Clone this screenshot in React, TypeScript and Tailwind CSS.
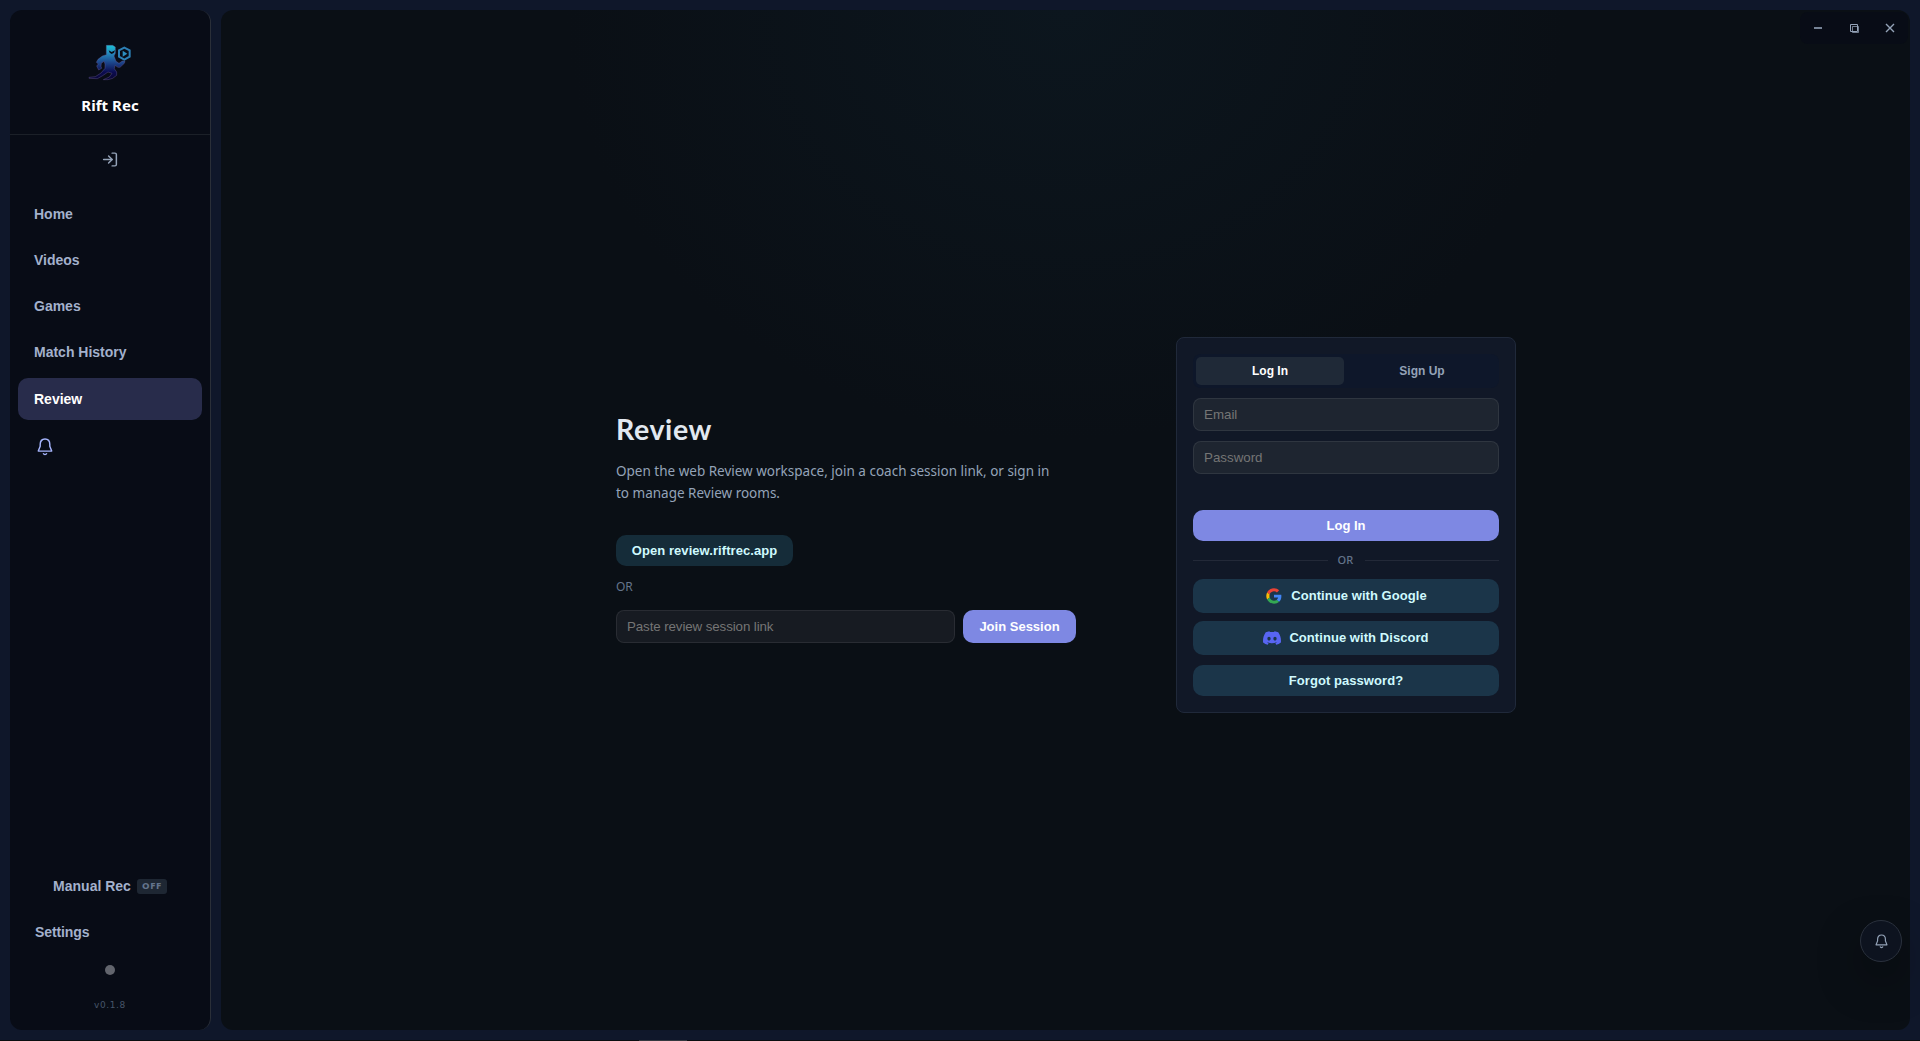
import type { ReactNode } from "react";
import { LogIn } from "lucide-react";
import { SiDiscord } from "react-icons/si";

const navItems = ["Home", "Videos", "Games", "Match History", "Review"];

const inputCls =
  "h-[33px] w-full rounded-lg border border-white/8 bg-[#1e2530] px-[10px] text-[13.33px] text-gray-200 outline-none placeholder:text-[#757575]";

const secondaryCls =
  "flex w-full items-center justify-center rounded-[10px] bg-[#1b3549] text-[13px] font-bold tracking-[0.06px] text-[#cffafe]";

function Logo() {
  return (
    <svg className="h-[37px] w-11" viewBox="264 132 132 111" fill="none">
      <defs>
        <linearGradient id="rift" x1="0" y1="134" x2="0" y2="240" gradientUnits="userSpaceOnUse">
          <stop offset="0" stopColor="#16c5d8" />
          <stop offset="0.22" stopColor="#2590c0" />
          <stop offset="0.5" stopColor="#1d478c" />
          <stop offset="0.78" stopColor="#0b0c50" />
          <stop offset="1" stopColor="#0a0630" />
        </linearGradient>
      </defs>
      <path
        fill="url(#rift)"
        stroke="#6a5a9a"
        strokeOpacity="0.6"
        strokeWidth="2"
        d="M319 136H338L346 141V160L342 168L348 184L357 190L367 183L375 184L373 190L360 202H354L345 196L343 206L350 216V226L338 235L324 239H310L328 231L336 220L324 216L308 227L292 236L267 235V232L286 230L303 219L315 205V192L312 184L304 190L303 199L305 205L296 210L290 198L295 192L289 187L294 178L307 168L319 164Z"
      />
      <path fill="#080c16" d="M326 151L335 156L345 151L342 158L335 162L329 158Z" />
      <path stroke="#2c7fb4" strokeWidth="6" d="M373 143L389 151V170L373 179L357 170V151Z" />
      <path fill="#2c8fc0" d="M368 152V170L382 161Z" />
    </svg>
  );
}

function GoogleIcon() {
  return (
    <svg className="h-[18px] w-[18px]" viewBox="-4 -4 56 56">
      <path
        fill="#EA4335"
        d="M24 9.5c3.54 0 6.71 1.22 9.21 3.6l6.85-6.85C35.9 2.38 30.47 0 24 0 14.62 0 6.51 5.38 2.56 13.22l7.98 6.19C12.43 13.72 17.74 9.5 24 9.5z"
      />
      <path
        fill="#4285F4"
        d="M46.98 24.55c0-1.57-.15-3.09-.38-4.55H24v9.02h12.94c-.58 2.96-2.26 5.48-4.78 7.18l7.73 6c4.51-4.18 7.09-10.36 7.09-17.65z"
      />
      <path
        fill="#FBBC05"
        d="M10.53 28.59c-.48-1.45-.76-2.99-.76-4.59s.27-3.14.76-4.59l-7.98-6.19C.92 16.46 0 20.12 0 24c0 3.88.92 7.54 2.56 10.78l7.97-6.19z"
      />
      <path
        fill="#34A853"
        d="M24 48c6.48 0 11.93-2.13 15.89-5.81l-7.73-6c-2.15 1.45-4.92 2.3-8.16 2.3-6.26 0-11.57-4.22-13.47-9.91l-7.98 6.19C6.51 42.62 14.62 48 24 48z"
      />
    </svg>
  );
}

function Bell({ className }: { className: string }) {
  return (
    <svg className={className} viewBox="0 0 16 18" fill="none" stroke="currentColor" strokeWidth="1.45">
      <path d="M3.2 8.2V6.3C3.2 3 5.2 1 8 1s4.8 2 4.8 5.3v1.9l1.9 4.9H1.3z" strokeLinejoin="round" />
      <path d="M6.2 15.2c.4.9 1 1.3 1.8 1.3s1.4-.4 1.8-1.3" />
    </svg>
  );
}

function Sidebar() {
  return (
    <aside className="flex w-[201px] shrink-0 flex-col rounded-xl border-r border-[#2a2f38] bg-[#080c16]">
      <div className="flex h-[125px] shrink-0 flex-col items-center border-b border-[#1b2028] pt-[34px]">
        <Logo />
        <h1 className="mt-[14px] font-['Noto_Sans',sans-serif] text-[15px] leading-5 font-bold tracking-[0.05px] text-white">
          Rift Rec
        </h1>
      </div>
      <button type="button" className="flex h-[50px] items-center justify-center pb-px text-[#94a3b8]" aria-label="Sign in">
        <LogIn className="h-[17px] w-[18px]" strokeWidth={2.1} />
      </button>

      <nav className="mt-2 flex flex-col gap-1 px-2">
        {navItems.map((item) => (
          <a
            key={item}
            className={
              item === "Review"
                ? "flex h-[42.25px] items-center rounded-[10px] bg-[#282c4b] px-4 pb-px text-sm font-bold text-white"
                : "flex h-[42.25px] items-center rounded-[10px] px-4 pb-px text-sm font-bold text-[#a3b1cc]"
            }
          >
            {item}
          </a>
        ))}
        <button type="button" className="mt-2 flex h-10 items-start px-[19px] pt-1.5 text-[#a5b4fc]" aria-label="Notifications">
          <Bell className="h-[18px] w-4" />
        </button>
      </nav>

      <div className="mt-auto flex flex-col text-[#a3b1cc]">
        <div className="flex h-[46px] items-center justify-center gap-1.5 text-sm font-bold">
          Manual Rec
          <span className="flex h-[15px] w-[30px] items-center justify-center rounded-[3px] bg-[#1e2733] font-['Noto_Sans',sans-serif] text-[9.5px] font-extrabold tracking-[0.6px] text-[#64748b]">
            OFF
          </span>
        </div>
        <a className="flex h-[46px] items-center pl-[25px] text-sm font-bold tracking-[-0.1px]">Settings</a>
        <span className="mt-[10px] h-2.5 w-2.5 self-center rounded-full bg-[#62656d]" />
        <span className="mt-[22px] mb-[17px] self-center font-['DejaVu_Sans',sans-serif] text-[9px] leading-4 tracking-[0.6px] text-[#475569]">
          v0.1.8
        </span>
      </div>
    </aside>
  );
}

function WindowControls() {
  return (
    <div className="absolute top-0.5 right-0.5 flex h-8 w-[108px] items-center justify-around rounded-lg bg-[#080c16] text-[#94a3b8]">
      <svg className="h-3 w-3" viewBox="0 0 12 12" stroke="currentColor" strokeWidth="1.6">
        <path d="M2 6h8" />
      </svg>
      <svg className="h-3 w-3" viewBox="0 0 12 12" fill="none" stroke="currentColor">
        <path d="M2.5 2.5h7v7h-7z" />
        <path d="M4.5 4.5h6v6h-6z" opacity="0.75" />
      </svg>
      <svg className="h-3 w-3" viewBox="0 0 12 12" stroke="currentColor" strokeWidth="1.4">
        <path d="M2 2l8 8M10 2l-8 8" />
      </svg>
    </div>
  );
}

function Intro() {
  return (
    <section className="w-[460px] pt-[14px]">
      <h2 className="font-['Lato',sans-serif] text-[28.5px] leading-9 font-bold tracking-[0.6px] text-[#e2e8f0]">Review</h2>
      <p className="mt-[13px] font-['Noto_Sans',sans-serif] text-[13.5px] leading-[22px] whitespace-nowrap text-[#94a3b8]">
        Open the web Review workspace, join a coach session link, or sign in
        <br />
        to manage Review rooms.
      </p>
      <button
        type="button"
        className="mt-[31px] flex h-[31px] w-[177px] items-center justify-center rounded-[10px] bg-[#152c39] text-[13px] font-bold tracking-[0.06px] text-[#cffafe]"
      >
        Open review.riftrec.app
      </button>
      <div className="mt-3 font-['Noto_Sans',sans-serif] text-xs leading-[18px] text-[#64748b]">OR</div>
      <div className="mt-3.5 flex gap-2">
        <input
          className="h-[33px] w-[339px] rounded-lg border border-white/8 bg-[#171b22] px-[10px] text-[13.33px] tracking-[-0.1px] outline-none placeholder:text-[#757575]"
          placeholder="Paste review session link"
        />
        <button type="button" className="h-[33px] w-[113px] rounded-[10px] bg-[#7e88e3] text-[13px] font-bold text-white">
          Join Session
        </button>
      </div>
    </section>
  );
}

function Divider({ children }: { children: ReactNode }) {
  return (
    <div className="mt-2 flex h-[22px] items-center font-['Noto_Sans',sans-serif] text-[11px] font-medium text-[#64748b]">
      <span className="h-px flex-1 bg-[#232938]" />
      <span className="w-[37px] pr-px text-center tracking-[0.3px]">{children}</span>
      <span className="h-px flex-1 bg-[#232938]" />
    </div>
  );
}

function AuthCard() {
  return (
    <section className="mt-2.5 h-[376px] w-[340px] rounded-lg border border-[#20293a] bg-[#111827] p-4">
      <div className="flex h-[34px] gap-1 rounded-lg bg-[#0e172a] p-[3px] text-xs font-bold">
        <button type="button" className="flex-1 rounded-[5px] bg-[#1f2937] text-white">
          Log In
        </button>
        <button type="button" className="flex-1 text-[#94a3b8]">
          Sign Up
        </button>
      </div>
      <div className="mt-2.5 flex flex-col gap-2.5">
        <input className={inputCls} placeholder="Email" />
        <input className={inputCls} placeholder="Password" type="password" />
      </div>
      <button type="button" className="mt-9 h-[31px] w-full rounded-[10px] bg-[#7e88e3] text-[13px] font-bold text-white">
        Log In
      </button>
      <Divider>OR</Divider>
      <button type="button" className={`${secondaryCls} mt-2 h-[34px] gap-2`}>
        <GoogleIcon />
        Continue with Google
      </button>
      <button type="button" className={`${secondaryCls} mt-2 h-[34px] gap-2`}>
        <SiDiscord className="h-[18px] w-[18px] text-[#5865f2]" />
        Continue with Discord
      </button>
      <button type="button" className={`${secondaryCls} mt-2.5 h-[31px]`}>
        Forgot password?
      </button>
    </section>
  );
}

export default function App() {
  return (
    <div className="relative flex h-[1041px] w-[1920px] gap-2.5 overflow-hidden bg-[#0f172a] px-2.5 pt-2.5 pb-[11px] font-['Liberation_Sans',Arial,sans-serif]">
      <Sidebar />
      <main className="relative flex flex-1 items-center justify-center gap-[100px] rounded-xl bg-[#0a0f15] bg-[radial-gradient(ellipse_500px_430px_at_50%_0%,#0c161e_0%,#0a0f15_100%)] pl-px">
        <WindowControls />
        <Intro />
        <AuthCard />
      </main>
      <button
        type="button"
        aria-label="Notifications"
        className="absolute top-[920px] left-[1860px] flex h-[42px] w-[42px] items-center justify-center rounded-full border border-[#2a313d] bg-[#0d131f] text-[#94a3b8] shadow-[0_18px_44px_rgba(0,0,0,0.35)]"
      >
        <Bell className="h-[15px] w-[13px]" />
      </button>
      {/* Sliver of the window edge */}
      <div className="absolute inset-x-0 bottom-0 flex h-px bg-[#0a0d10] pl-[639px]">
        <span className="h-px w-12 bg-[#34383f]" />
      </div>
    </div>
  );
}
